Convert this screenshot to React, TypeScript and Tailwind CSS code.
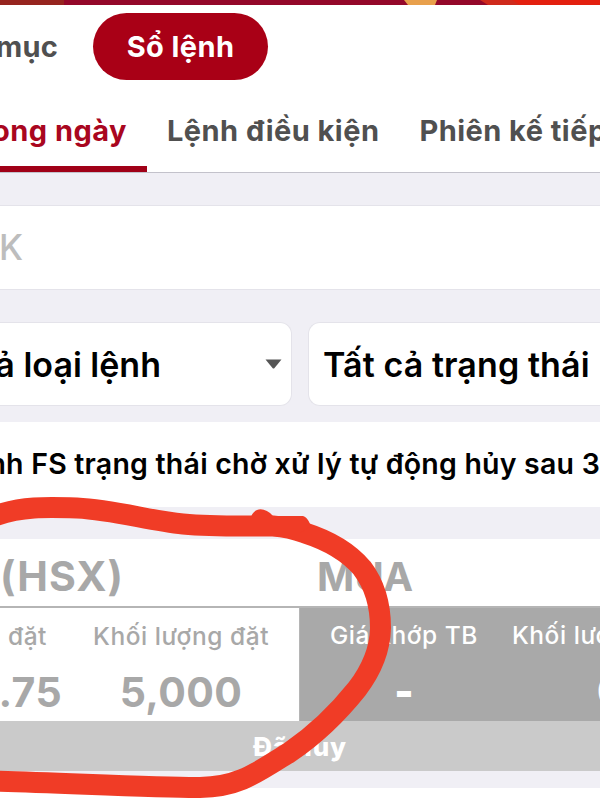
import React from 'react';

interface MetricProps {
  label: string;
  value: string;
  className?: string;
  labelClassName?: string;
  valueClassName?: string;
}

const Metric: React.FC<MetricProps> = ({
  label,
  value,
  className = '',
  labelClassName = '',
  valueClassName = 'font-bold tracking-[0.4px]',
}) => (
  <div className={`flex shrink-0 flex-col items-center whitespace-nowrap ${className}`}>
    <span className={`text-[24.5px] leading-[32px] font-medium tracking-[0.55px] ${labelClassName}`}>{label}</span>
    <span className={`mt-[17px] text-[41px] leading-[46px] ${valueClassName}`}>{value}</span>
  </div>
);

// Strip of the promo banner still visible above the page
const BannerEdge = () => (
  <svg className="block h-[5px] w-full shrink-0" viewBox="0 0 600 5" preserveAspectRatio="none">
    <rect width="600" height="5" fill="#94082a" />
    <rect width="64" height="5" fill="#96241f" />
    <path d="M404 0H437L435 5H408Z" fill="#e8a04c" />
    <path d="M480 0H600V5H488Z" fill="#cf2a1c" />
    <path d="M512 0H600V5H520Z" fill="#e3200f" />
  </svg>
);

const TopNav = () => (
  <div className="flex h-[83px] items-center">
    <div className="flex w-[58px] shrink-0 justify-end text-[29px] font-bold tracking-[0.2px] whitespace-nowrap text-[#505050]">
      Danh mục
    </div>
    <button className="ml-[35px] h-[67px] w-[175px] shrink-0 rounded-full bg-[#a90016] text-[29px] font-bold tracking-[0.4px] text-white">
      Sổ lệnh
    </button>
  </div>
);

const Tabs = () => (
  <div className="flex h-[85px] border-b border-[#c3c2cb] text-[29px] leading-[85px] font-bold tracking-[0.46px] whitespace-nowrap text-[#505050]">
    <div className="flex h-[84px] w-[147px] shrink-0 justify-end border-b-[6px] border-[#a00017] pr-[20px] text-[#a90620]">
      Trong ngày
    </div>
    <div className="ml-5 shrink-0">Lệnh điều kiện</div>
    <div className="ml-10 shrink-0">Phiên kế tiếp</div>
  </div>
);

const Filters = () => (
  <div className="flex flex-col bg-[#f0eff5] pt-8 pb-4">
    <div className="flex h-[85px] items-center border-y border-[#e4e3ea] bg-white">
      <div className="flex w-[23px] shrink-0 justify-end text-[35px] font-medium whitespace-nowrap text-[#bdbdbd]">
        Mã CK
      </div>
    </div>
    <div className="mt-8 flex gap-4">
      <div className="flex h-[84px] w-[292px] shrink-0 items-center justify-between rounded-r-xl border border-l-0 border-[#e4e3ea] bg-white pr-[9px]">
        <div className="flex w-[161px] shrink-0 justify-end text-[34px] font-semibold whitespace-nowrap">
          Tất cả loại lệnh
        </div>
        <svg className="h-[10px] w-[17px]" viewBox="0 0 17 10">
          <path d="M0.5 0.5H16.5L9.5 9Q8.5 10 7.5 9Z" fill="#555" />
        </svg>
      </div>
      <div className="flex h-[84px] w-[292px] shrink-0 items-center rounded-l-xl border border-r-0 border-[#e4e3ea] bg-white pl-[14px] text-[34px] font-semibold tracking-[0.1px] whitespace-nowrap">
        Tất cả trạng thái
      </div>
    </div>
  </div>
);

const OrderCard = () => (
  <div className="bg-white">
    <div className="flex h-[67px] items-center pt-2 text-[40px] font-bold whitespace-nowrap text-[#a8a8a8]">
      <div className="flex w-[124px] shrink-0 justify-end text-[41px] tracking-[1px]">SSI (HSX)</div>
      <div className="ml-[193px] tracking-[0.3px]">MUA</div>
    </div>
    <div className="flex h-[115px] border-t-2 border-[#b5b5b5]">
      <div className="flex w-[300px] shrink-0 overflow-hidden border-r border-[#b5b5b5] pt-3 text-[#a8a8a8]">
        <div className="flex w-[62px] shrink-0 justify-end">
          <Metric label="Giá đặt" value="32.75" className="items-end" labelClassName="mr-[15px]" />
        </div>
        <Metric label="Khối lượng đặt" value="5,000" className="ml-[31px]" />
      </div>
      <div className="flex grow bg-[#a9a9a9] pt-[11px] pl-[30px] text-white">
        <Metric label="Giá khớp TB" value="-" valueClassName="font-black" />
        <Metric label="Khối lượng khớp" value="0" className="ml-[34px]" />
      </div>
    </div>
    <div className="flex h-[50px] items-center justify-center bg-[#cacaca] text-[26px] font-extrabold tracking-[0.8px] text-white">
      Đã hủy
    </div>
  </div>
);

// Freehand red circle drawn around the price and volume
const Marker = () => (
  <svg className="pointer-events-none absolute inset-0 h-[800px] w-[600px]" viewBox="0 0 600 800">
    <path
      d="M-8 517C20 506 48 507 77 508C115 510 150 521 183 524C215 527 245 526 273 526C288 527 297 530 305 533C330 541 350 554 362 568C375 585 380.5 605 380.5 628C380 652 370 672 357 689C337 714 312 737 290 752C255 774 238 787 200 787.5C165 788 65 783 -8 781"
      fill="none"
      stroke="#f03c26"
      strokeWidth="21"
    />
    <path d="M250 520C253 506 265 507 273 516H303C308 518 309 522 311 526L300 533H250Z" fill="#f03c26" />
  </svg>
);

export default function App() {
  return (
    <div className="relative flex h-[800px] w-[600px] flex-col overflow-hidden bg-white font-[Inter,sans-serif] text-black">
      <BannerEdge />
      <TopNav />
      <Tabs />
      <Filters />
      <div className="flex h-[85px] shrink-0 items-center justify-end bg-white whitespace-nowrap">
        <div className="text-[28.5px] font-semibold tracking-[0.22px]">Lệnh FS trạng thái chờ xử lý tự động hủy sau 3</div>
      </div>
      <div className="h-8 shrink-0 bg-[#f0eff5]" />
      <OrderCard />
      <div className="h-[17px] shrink-0 bg-[#f0eff5]" />
      <Marker />
    </div>
  );
}
